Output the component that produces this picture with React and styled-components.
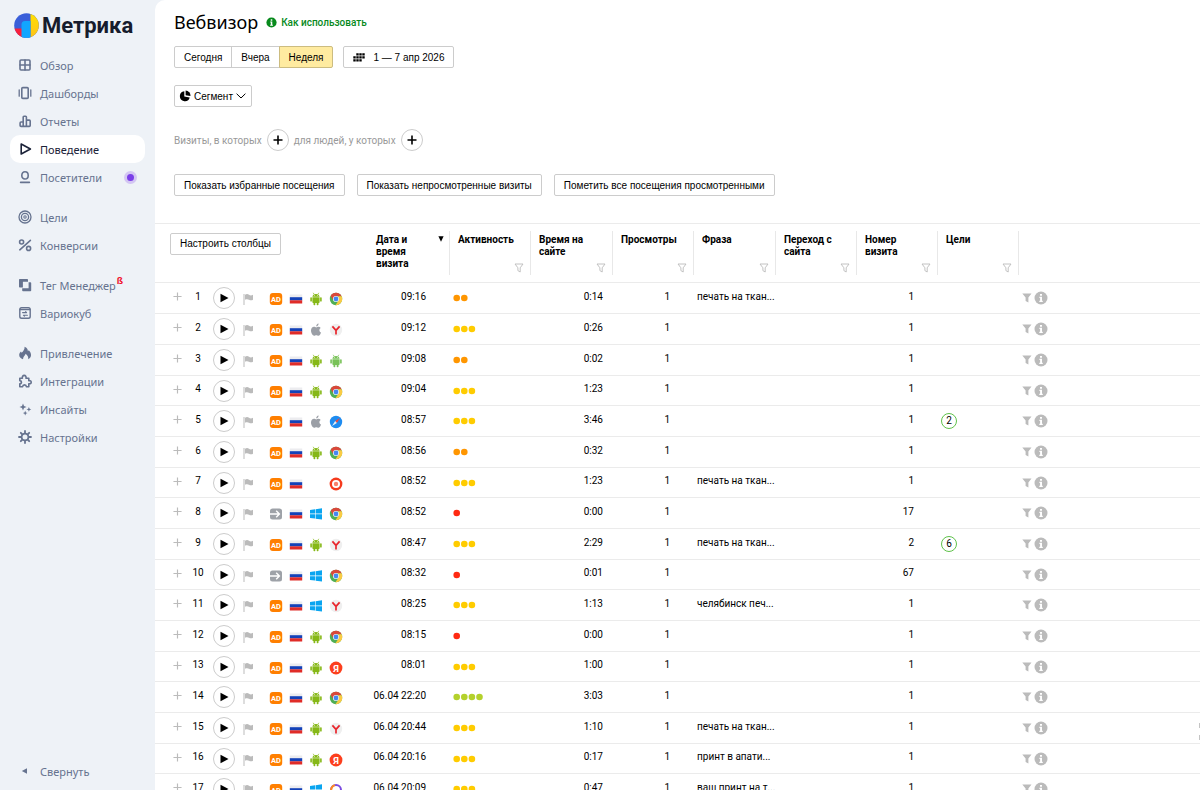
import React from "react";
import styled, { createGlobalStyle, css } from "styled-components";

const GlobalStyle = createGlobalStyle`
  * {
    box-sizing: border-box;
  }

  body {
    margin: 0;
    background: #eef2f7;
    color: #000;
    font-family: Roboto, "Noto Sans", sans-serif;
    font-size: 10px;
  }

  button {
    padding: 0;
    border: 0;
    background: none;
    color: inherit;
    font: inherit;
    cursor: pointer;
  }
`;

const Layout = styled.div`
  display: flex;
  height: 100vh;
  overflow: hidden;
`;

/* ---------- sidebar ---------- */

const Sidebar = styled.aside`
  display: flex;
  flex-direction: column;
  flex: 0 0 155px;
  padding: 10px 10px 5px;
`;

const Logo = styled.a`
  display: flex;
  align-items: center;
  gap: 3px;
  height: 31px;
  padding-left: 4px;
  margin-bottom: 10px;
  color: #161c2d;
  font-size: 22px;
  font-weight: 700;
  line-height: 30px;
  text-decoration: none;
`;

const Nav = styled.nav`
  display: flex;
  flex-direction: column;
  gap: 12px;
  flex: 1;
`;

const NavGroup = styled.ul`
  margin: 0;
  padding: 0;
  list-style: none;
`;

const navItem = css`
  display: flex;
  align-items: center;
  width: 100%;
  height: 28px;
  padding: 0 8px;
  border-radius: 10px;
  color: #66738f;
  font-family: "Noto Sans", sans-serif;
  font-size: 11px;
  font-weight: 400;
  text-decoration: none;

  svg {
    flex: none;
    margin-right: 8px;
  }
`;

const NavLink = styled.a`
  ${navItem}
  ${({ $active }) =>
    $active &&
    css`
      background: #fff;
      color: #1b2238;
    `}
`;

const CollapseButton = styled.button`
  ${navItem}
`;

const Beta = styled.sup`
  align-self: flex-start;
  margin: 5px 0 0 1px;
  color: #f0142d;
  font-size: 9px;
  font-weight: 700;
  line-height: 10px;
`;

const NewDot = styled.span`
  width: 13px;
  height: 13px;
  margin-left: auto;
  border: 3px solid #d3c6f3;
  border-radius: 50%;
  background: #7a3fe8;
`;

/* ---------- main panel ---------- */

const Main = styled.main`
  position: relative;
  flex: 1;
  min-width: 0;
  overflow: hidden;
  border-top-left-radius: 10px;
  background: #fff;
`;

const Head = styled.header`
  padding: 8px 19px 27px;
`;

const TitleRow = styled.div`
  display: flex;
  align-items: center;
  gap: 8px;
  height: 28px;
`;

const Title = styled.h1`
  margin: 0;
  font-family: "Noto Sans", sans-serif;
  font-size: 18px;
  font-weight: 400;
`;

const HelpLink = styled.a`
  display: flex;
  align-items: center;
  gap: 4px;
  color: #078a1c;
  font-weight: 500;
  text-decoration: none;
`;

const Controls = styled.div`
  display: flex;
  align-items: center;
  gap: ${({ $gap }) => $gap || 12}px;
  margin-top: ${({ $top }) => $top}px;
`;

const Button = styled.button`
  display: flex;
  align-items: center;
  height: 22px;
  padding: 0 9px;
  border: 1px solid #ccc;
  border-radius: 2px;
  background: #fff;
  font-family: "Liberation Sans", Arial, sans-serif;
  font-weight: 400;
  white-space: nowrap;
`;

const DateButton = styled(Button)`
  gap: 8px;
`;

const SegmentButton = styled(Button)`
  gap: 3px;
  padding: 0 5px 0 4px;
`;

const Tabs = styled.div`
  display: flex;
`;

const Tab = styled(Button)`
  margin-left: -1px;
  border-radius: 0;

  &:first-child {
    margin-left: 0;
    border-radius: 2px 0 0 2px;
  }

  &:last-child {
    border-radius: 0 2px 2px 0;
  }

  ${({ $active }) =>
    $active &&
    css`
      border-color: #ccbc80;
      background: #ffeba0;
    `}
`;

const Hint = styled.span`
  color: #999;
`;

const RoundButton = styled.button`
  display: flex;
  align-items: center;
  justify-content: center;
  flex: none;
  width: 22px;
  height: 22px;
  border: 1px solid #ccc;
  border-radius: 50%;
  background: #fff;
`;

/* ---------- visits table ---------- */

const Table = styled.table`
  width: 100%;
  border-top: 1px solid #ebebeb;
  border-spacing: 0;
  table-layout: fixed;
`;

const Th = styled.th`
  padding: 7px 0;
  border-bottom: 1px solid #ebebeb;
  font-weight: 700;
  line-height: 12px;
  text-align: left;
  vertical-align: top;
`;

const HeadCell = styled.div`
  display: flex;
  justify-content: space-between;
  height: 44px;
  padding: 3px 6px 0 8px;
  border-right: 1px solid #e8e8e8;

  svg {
    flex: none;
    align-self: ${({ $sorted }) => ($sorted ? "flex-start" : "flex-end")};
    margin: ${({ $sorted }) => ($sorted ? "2px -1px 0 0" : "0 0 2px -9px")};
  }
`;

const HeadLabel = styled.span`
  max-width: 56px;
`;

const SetupCell = styled.div`
  padding: 2px 0 0 15px;
`;

const Row = styled.tr`
  height: 31px;

  &:nth-child(3n + 4) {
    height: 30px;
  }
`;

const Td = styled.td`
  padding: 0 ${({ $right }) => $right || 0}px 4px 3px;
  border-bottom: 1px solid #ebebeb;
  text-align: ${({ $right }) => ($right ? "right" : "left")};
  white-space: nowrap;
`;

const IconTd = styled(Td)`
  padding-bottom: 0;

  svg {
    display: block;
  }
`;

const Lead = styled.div`
  display: flex;
  align-items: center;
  height: 28px;
  padding-left: 15px;
`;

const Expand = styled.button`
  display: flex;
  width: 10px;
  margin-bottom: 3px;
`;

const Index = styled.span`
  width: 30px;
  padding-bottom: 4px;
  text-align: center;
`;

const FlagButton = styled.button`
  display: flex;
  margin: 2px 14px 0 8px;
`;

const Badges = styled.div`
  display: grid;
  grid-template-columns: repeat(4, 14px);
  gap: 6px;
  height: 14px;
  margin-top: 2px;
`;

const Goal = styled.span`
  display: block;
  width: 16px;
  height: 16px;
  border: 1px solid #5fc24a;
  border-radius: 50%;
  line-height: 14px;
  text-align: center;
`;

const Actions = styled.div`
  display: flex;
  align-items: center;
  gap: 2px;
`;

/* handle of the help widget, tucked behind the right edge */
const WidgetHandle = styled.span`
  position: absolute;
  right: 0;
  bottom: 50px;
  width: 1px;
  height: 17px;
  border: solid #c4c4c4;
  border-width: 5px 0;
`;

/* ---------- sidebar icons ---------- */

const Stroke = ({ children }) => (
  <svg
    width="14"
    height="14"
    viewBox="0 0 14 14"
    fill="none"
    stroke="currentColor"
    strokeWidth="1.6"
    strokeLinejoin="round"
    strokeLinecap="round"
    aria-hidden="true"
  >
    {children}
  </svg>
);

const Solid = ({ children }) => (
  <svg width="14" height="14" viewBox="0 0 14 14" fill="currentColor" aria-hidden="true">
    {children}
  </svg>
);

const icons = {
  overview: (
    <Stroke>
      <rect x="2" y="2" width="10" height="10" rx="1" />
      <path d="M7 2v10M2 7h10" />
    </Stroke>
  ),
  boards: (
    <Stroke>
      <rect x="3.8" y="1.6" width="6.4" height="10.8" rx="1" />
      <path d="M1.2 3.8v6.4M12.8 3.8v6.4" strokeWidth="1.3" />
    </Stroke>
  ),
  reports: (
    <Stroke>
      <path d="M5.2 12.4V3q0-.8.8-.8h1.6q.8 0 .8.8v9.4M5.2 8H3q-.9 0-.9.9v2.6q0 .9.9.9h8.3q.9 0 .9-.9V7q0-.9-.9-.9H8.4" />
    </Stroke>
  ),
  behavior: (
    <Stroke>
      <path d="M3.2 2l9.2 5-9.2 5z" />
    </Stroke>
  ),
  visitors: (
    <Stroke>
      <path d="M7 1.8c2 0 3.2 1.5 3.2 3.6S9 9 7 9 3.8 7.5 3.8 5.4 5 1.8 7 1.8zM2.6 12.4h8.8" />
    </Stroke>
  ),
  goals: (
    <Stroke>
      <circle cx="7" cy="7" r="6" strokeWidth="1.3" />
      <circle cx="7" cy="7" r="3.6" strokeWidth="1.3" />
      <circle cx="7" cy="7" r="1.2" strokeWidth="1.1" />
    </Stroke>
  ),
  conversions: (
    <Stroke>
      <path d="M12.4 2.4L1.8 11.8" />
      <circle cx="3.6" cy="4" r="2" />
      <circle cx="10.6" cy="10.4" r="2" />
    </Stroke>
  ),
  tags: (
    <Solid>
      <path d="M1.8 1h7.4q.8 0 .8.8v1.9H4.9v5.9H1.8q-.8 0-.8-.8V1.8q0-.8.8-.8z" />
      <path d="M10.6 4.2h1.8q.8 0 .8.8v7.4q0 .8-.8.8H5q-.8 0-.8-.8v-2.2h6.4z" />
    </Solid>
  ),
  variocube: (
    <Stroke>
      <rect x="1.8" y="1.8" width="10.4" height="10.4" rx="1.8" strokeWidth="1.4" />
      <path d="M2 3.6h10" strokeWidth="1.2" />
      <path d="M4.6 6.6h4l-1-1M9.4 9.2h-4l1 1" strokeWidth="1.1" />
    </Stroke>
  ),
  acquisition: (
    <Solid>
      <path d="M6.6.8c3 1.4 3.4 3.2 3.2 4.4l1-1c1.6 1.8 2.4 3.4 2.2 5.4-.2 1.8-1.2 3-2.8 3.6.4-2-.6-4-2.6-5.4C7.2 9.6 5.2 10.2 5 13.2 2.6 12.6 1.2 11 1.2 9c0-1.600.8-2.600 1.800-3.600l.6 1.400C5 5.600 6.800 3.600 6.600.8z" />
    </Solid>
  ),
  integrations: (
    <Stroke>
      <path d="M1.8 4.2h2.6C4 2.6 4.9 1.4 6.2 1.4s2.2 1.2 1.8 2.8h2.8v2.5c1.5-.3 2.4.4 2.4 1.5s-.9 1.9-2.4 1.5v3H8.4c-.1-1.2-.8-1.8-1.9-1.8s-1.8.6-1.9 1.800H1.800V9.900C3 9.700 3.500 9 3.500 8.200S3 6.800 1.800 6.600z" />
    </Stroke>
  ),
  insights: (
    <Solid>
      <path d="M5 1.5l1 2.500 2.500 1L6 6 5 8.500 4 6 1.500 5 4 4zM10.900 5l.7 1.700 1.700.7-1.700.7-.7 1.700-.7-1.700-1.700-.7 1.700-.7zM7.200 8.800l.7 1.600 1.600.7-1.600.7-.7 1.600-.7-1.600-1.600-.7 1.600-.7z" />
    </Solid>
  ),
  settings: (
    <Stroke>
      <circle cx="7" cy="7" r="3.4" strokeWidth="1.8" />
      <path
        d="M7 1v1.8M7 11.2V13M1 7h1.8M11.2 7H13M2.8 2.8L4 4M10 10l1.2 1.2M2.8 11.2L4 10M10 4l1.2-1.2"
        strokeWidth="1.8"
      />
    </Stroke>
  ),
  collapse: (
    <Solid>
      <path d="M9 4.2v5.6L3.8 7z" />
    </Solid>
  ),
};

const LogoMark = () => (
  <svg width="25" height="25" viewBox="0 0 25 25" aria-hidden="true">
    <defs>
      <clipPath id="logo-round">
        <circle cx="12.5" cy="12.5" r="12.3" />
      </clipPath>
      <linearGradient id="logo-sun" x1="0" y1="0" x2="0" y2="1">
        <stop offset="0" stopColor="#ffe000" />
        <stop offset="1" stopColor="#ffc21a" />
      </linearGradient>
    </defs>
    <g clipPath="url(#logo-round)">
      <rect width="25" height="25" fill="#3a5fd9" />
      <rect y="15.5" width="9" height="10" fill="#f8203c" />
      <rect x="16.5" width="9" height="25" fill="url(#logo-sun)" />
      <path d="M7.5 25V11.5q0-3.500 3.500-3.500h5.500V25z" fill="#12a5ff" />
    </g>
  </svg>
);

/* ---------- page icons ---------- */

const InfoIcon = ({ size, color }) => (
  <svg width={size} height={size} viewBox="0 0 14 14" aria-hidden="true">
    <circle cx="7" cy="7" r="6.5" fill={color} />
    <path d="M6 3h2v1.8H6zM5.400 5.800H8v4h.8V11H5.300V9.800h.8V7h-.7z" fill="#fff" />
  </svg>
);

const CalendarIcon = () => (
  <svg width="12" height="9" viewBox="0 0 12 9" aria-hidden="true">
    <path
      d="M3.300.2h2.400v2.400H3.300zM6.300.2h2.400v2.400H6.300zM9.300.2h2.400v2.400H9.300zM.3 3.200h2.400v2.400H.3zM3.300 3.200h2.400v2.400H3.300zM6.300 3.200h2.400v2.400H6.300zM9.300 3.200h2.400v2.400H9.300zM.3 6.200h2.400v2.400H.3zM3.300 6.200h2.400v2.400H3.300zM6.300 6.200h2.400v2.400H6.300z"
      fill="#000"
    />
  </svg>
);

const PieIcon = () => (
  <svg width="12" height="12" viewBox="0 0 12 12" aria-hidden="true">
    <path d="M5.300 1.200A5 5 0 1 0 10.700 7.400L5.300 6.400z" fill="#000" />
    <path d="M6.600.4a5 5 0 0 1 4.800 5.600l-4.800-.8z" fill="#000" />
  </svg>
);

const ChevronIcon = () => (
  <svg width="10" height="6" viewBox="0 0 10 6" aria-hidden="true">
    <path d="M.6.7L5 5 9.400.7" fill="none" stroke="#000" />
  </svg>
);

const PlusIcon = ({ size, color, weight }) => (
  <svg width={size} height={size} viewBox="0 0 10 10" aria-hidden="true">
    <path d="M5 .5v9M.5 5h9" stroke={color} strokeWidth={weight} />
  </svg>
);

const FunnelOutline = () => (
  <svg width="10" height="10" viewBox="0 0 10 10" aria-hidden="true">
    <path d="M1 1h8L6.200 4.800V9L3.900 7.600V4.800z" fill="none" stroke="#bbb" strokeWidth=".9" />
  </svg>
);

const FunnelIcon = () => (
  <svg width="10" height="10" viewBox="0 0 10 10" aria-hidden="true">
    <path d="M.3.5h9.200L6.400 4.600v5L3.600 8V4.600z" fill="#bbb" />
  </svg>
);

const SortIcon = () => (
  <svg width="6" height="6" viewBox="0 0 6 6" aria-hidden="true">
    <path d="M.4.3h5.200L3 5.800z" fill="#000" />
  </svg>
);

const PlayIcon = () => (
  <svg width="10" height="10" viewBox="0 0 10 10" aria-hidden="true">
    <path d="M1.500.7L9.500 5l-8 4.300z" fill="#000" />
  </svg>
);

const FavoriteIcon = () => (
  <svg width="12" height="12" viewBox="0 0 12 12" aria-hidden="true">
    <path d="M1 1v11" stroke="#bbb" strokeWidth="1" />
    <path d="M2 1.800c1.600-1 2.800-.8 4 0s2.600.8 4 0v5c-1.400.8-2.800.6-4 0s-2.400-.8-4 0z" fill="#bbb" />
  </svg>
);

const sources = {
  ad: (
    <svg width="14" height="14" viewBox="0 0 14 14" role="img" aria-label="Реклама">
      <rect x=".8" y="1" width="12.4" height="12" rx="3" fill="#ff7f00" />
      <text
        x="7"
        y="9.8"
        fill="#fff"
        fontFamily="Roboto, sans-serif"
        fontSize="7.5"
        fontWeight="700"
        textAnchor="middle"
      >
        AD
      </text>
    </svg>
  ),
  direct: (
    <svg width="14" height="14" viewBox="0 0 14 14" role="img" aria-label="Прямой заход">
      <rect x="1" y="1.5" width="12" height="11" rx="2.5" fill="#9ea2a8" />
      <path d="M0 7h10M7.200 3.800L10.400 7l-3.200 3.200" fill="none" stroke="#fff" strokeWidth="1.4" />
    </svg>
  ),
};

const RussiaFlag = () => (
  <svg width="14" height="14" viewBox="0 0 14 14" role="img" aria-label="Россия">
    <rect x=".8" y="2.5" width="12.4" height="3.2" fill="#ececef" />
    <rect x=".8" y="5.2" width="12.4" height="3.2" fill="#1442b8" />
    <rect x=".8" y="8.3" width="12.4" height="3.2" fill="#e02c28" />
  </svg>
);

const Droid = ({ color }) => (
  <svg width="14" height="14" viewBox="0 0 14 14" role="img" aria-label="Android">
    <g fill={color}>
      <path d="M3.400 4.700C3.500 3 5 1.900 7 1.900s3.500 1.100 3.600 2.800zM3.400 5.200h7.200v5q0 .8-.8.8H4.200q-.8 0-.8-.8z" />
      <rect x="1.3" y="5.2" width="1.6" height="4.4" rx=".7" />
      <rect x="11.1" y="5.2" width="1.6" height="4.4" rx=".7" />
      <rect x="4.5" y="10" width="1.8" height="3.3" rx=".7" />
      <rect x="7.7" y="10" width="1.8" height="3.3" rx=".7" />
    </g>
    <path d="M4.200.8l.9 1.500M9.800.8l-.9 1.500" stroke={color} strokeWidth=".7" />
    <circle cx="5.4" cy="3.5" r=".45" fill="#fff" />
    <circle cx="8.6" cy="3.5" r=".45" fill="#fff" />
  </svg>
);

const systems = {
  android: <Droid color="#86b817" />,
  apple: (
    <svg width="14" height="14" viewBox="0 0 14 14" fill="#9b9fa6" role="img" aria-label="iOS">
      <path d="M7.200 3.500C7.200 2 8.200.8 9.600.6c.1 1.500-1 2.800-2.400 2.900z" />
      <path d="M7.200 4.400c.6 0 1.300-.6 2.300-.6.9 0 1.700.4 2.200 1.200-1.900 1.200-1.600 3.700.4 4.500-.5 1.400-1.500 3.300-2.700 3.300-.8 0-1.100-.5-2.100-.5s-1.300.5-2.100.5C3.700 12.800 2 10 2 7.600 2 5.200 3.400 3.800 5 3.800c.9 0 1.600.6 2.200.6z" />
    </svg>
  ),
  windows: (
    <svg width="14" height="14" viewBox="0 0 14 14" fill="#0aa5f0" role="img" aria-label="Windows">
      <path d="M1 3l5-.7v4.300H1zM6.600 2.200L13 1.300v5.300H6.600zM1 7.200h5v4.400L1 10.900zM6.600 7.200H13v5.400l-6.400-.9z" />
    </svg>
  ),
};

const browsers = {
  chrome: (
    <svg width="14" height="14" viewBox="0 0 14 14" role="img" aria-label="Chrome">
      <circle cx="7" cy="7" r="6.2" fill="#4fae54" />
      <path d="M1.600 3.900A6.200 6.200 0 0 1 12.600 4.300H7L4.400 8.400z" fill="#d9483b" />
      <path d="M12.600 4.300A6.200 6.200 0 0 1 6.400 13.200L9.700 8.400 9.200 4.300z" fill="#fbcb43" />
      <circle cx="7" cy="7" r="3" fill="#fff" />
      <circle cx="7" cy="7" r="2.4" fill="#4587f0" />
    </svg>
  ),
  yandex: (
    <svg width="14" height="14" viewBox="0 0 14 14" role="img" aria-label="Яндекс Браузер">
      <circle cx="7" cy="7" r="6.2" fill="#efefef" />
      <path d="M3.400 3.400L7 7.400l3.600-4M7 7v4.600" fill="none" stroke="#e8262d" strokeWidth="1.7" />
    </svg>
  ),
  webview: <Droid color="#78c257" />,
  safari: (
    <svg width="14" height="14" viewBox="0 0 14 14" role="img" aria-label="Safari">
      <circle cx="7" cy="7" r="6.2" fill="#1f8cf0" />
      <path d="M11 3L7.900 7.900 6.100 6.100z" fill="#f0483c" />
      <path d="M3 11l3.100-4.900 1.800 1.800z" fill="#e8eef5" />
    </svg>
  ),
  search: (
    <svg width="14" height="14" viewBox="0 0 14 14" role="img" aria-label="Яндекс">
      <circle cx="7" cy="7" r="6.4" fill="#f53a1d" />
      <circle cx="7" cy="7" r="4" fill="#fff" />
      <circle cx="7" cy="7" r="2.2" fill="#f7806c" />
    </svg>
  ),
  app: (
    <svg width="14" height="14" viewBox="0 0 14 14" role="img" aria-label="Яндекс">
      <circle cx="7" cy="7" r="6.4" fill="#fc3f1d" />
      <text
        x="7"
        y="10.5"
        fill="#fff"
        fontFamily="Roboto, sans-serif"
        fontSize="9.5"
        fontWeight="700"
        textAnchor="middle"
      >
        Я
      </text>
    </svg>
  ),
  firefox: (
    <svg width="14" height="14" viewBox="0 0 14 14" role="img" aria-label="Firefox">
      <circle cx="7" cy="7" r="5" fill="#fff" stroke="#7b4be0" strokeWidth="2" />
      <path d="M2.600 9A5 5 0 0 1 6 2.100" fill="none" stroke="#ff8a1f" strokeWidth="2" />
    </svg>
  ),
};

const dotColors = { 1: "#ff2a12", 2: "#ff9600", 3: "#ffcc00", 4: "#b4d12c" };

const Activity = ({ level }) => (
  <svg width="32" height="8" viewBox="0 0 32 8" role="img" aria-label={`Активность: ${level}`}>
    {Array.from({ length: level }, (_, i) => (
      <circle key={i} cx={3.7 + i * 7.6} cy="4" r="3.3" fill={dotColors[level]} />
    ))}
  </svg>
);

/* ---------- data ---------- */

const menu = [
  [
    { icon: "overview", label: "Обзор" },
    { icon: "boards", label: "Дашборды" },
    { icon: "reports", label: "Отчеты" },
    { icon: "behavior", label: "Поведение", active: true },
    { icon: "visitors", label: "Посетители", dot: true },
  ],
  [
    { icon: "goals", label: "Цели" },
    { icon: "conversions", label: "Конверсии" },
  ],
  [
    { icon: "tags", label: "Тег Менеджер", beta: true },
    { icon: "variocube", label: "Вариокуб" },
  ],
  [
    { icon: "acquisition", label: "Привлечение" },
    { icon: "integrations", label: "Интеграции" },
    { icon: "insights", label: "Инсайты" },
    { icon: "settings", label: "Настройки" },
  ],
];

const columns = [
  { label: "Дата и время визита", width: 82, sorted: true },
  { label: "Активность", width: 81 },
  { label: "Время на сайте", width: 82 },
  { label: "Просмотры", width: 81 },
  { label: "Фраза", width: 82 },
  { label: "Переход с сайта", width: 81 },
  { label: "Номер визита", width: 81 },
  { label: "Цели", width: 81 },
];

// source, os, browser, time, activity, duration, phrase, visit number, goals
const visits = [
  ["ad", "android", "chrome", "09:16", 2, "0:14", "печать на ткан...", 1],
  ["ad", "apple", "yandex", "09:12", 3, "0:26", "", 1],
  ["ad", "android", "webview", "09:08", 2, "0:02", "", 1],
  ["ad", "android", "chrome", "09:04", 3, "1:23", "", 1],
  ["ad", "apple", "safari", "08:57", 3, "3:46", "", 1, 2],
  ["ad", "android", "chrome", "08:56", 2, "0:32", "", 1],
  ["ad", "", "search", "08:52", 3, "1:23", "печать на ткан...", 1],
  ["direct", "windows", "chrome", "08:52", 1, "0:00", "", 17],
  ["ad", "android", "yandex", "08:47", 3, "2:29", "печать на ткан...", 2, 6],
  ["direct", "windows", "chrome", "08:32", 1, "0:01", "", 67],
  ["ad", "windows", "yandex", "08:25", 3, "1:13", "челябинск печ...", 1],
  ["ad", "android", "chrome", "08:15", 1, "0:00", "", 1],
  ["ad", "android", "app", "08:01", 3, "1:00", "", 1],
  ["ad", "android", "chrome", "06.04 22:20", 4, "3:03", "", 1],
  ["ad", "android", "yandex", "06.04 20:44", 3, "1:10", "печать на ткан...", 1],
  ["ad", "android", "app", "06.04 20:16", 3, "0:17", "принт в апати...", 1],
  ["ad", "windows", "firefox", "06.04 20:09", 3, "0:47", "ваш принт на т...", 1],
];

const Visit = ({ index, visit }) => {
  const [source, os, browser, time, activity, duration, phrase, number, goals] = visit;

  return (
    <Row>
      <IconTd>
        <Lead>
          <Expand aria-label="Развернуть">
            <PlusIcon size="9" color="#bbb" weight="1.3" />
          </Expand>
          <Index>{index}</Index>
          <RoundButton aria-label="Воспроизвести">
            <PlayIcon />
          </RoundButton>
          <FlagButton aria-label="В избранное">
            <FavoriteIcon />
          </FlagButton>
          <Badges>
            {sources[source]}
            <RussiaFlag />
            {systems[os] || <span />}
            {browsers[browser]}
          </Badges>
        </Lead>
      </IconTd>
      <Td $right={24}>{time}</Td>
      <IconTd>
        <Activity level={activity} />
      </IconTd>
      <Td $right={10}>{duration}</Td>
      <Td $right={24}>1</Td>
      <Td>{phrase}</Td>
      <Td />
      <Td $right={24}>{number}</Td>
      <IconTd>{goals && <Goal>{goals}</Goal>}</IconTd>
      <IconTd>
        <Actions>
          <button aria-label="Фильтр">
            <FunnelIcon />
          </button>
          <button aria-label="Информация о визите">
            <InfoIcon size="14" color="#bbb" />
          </button>
        </Actions>
      </IconTd>
    </Row>
  );
};

const App = () => {
  return (
    <Layout>
      <GlobalStyle />
      <Sidebar>
        <Logo href="#">
          <LogoMark />
          Метрика
        </Logo>
        <Nav>
          {menu.map((group, i) => (
            <NavGroup key={i}>
              {group.map((item) => (
                <li key={item.icon}>
                  <NavLink href="#" $active={item.active}>
                    {icons[item.icon]}
                    {item.label}
                    {item.beta && <Beta>ß</Beta>}
                    {item.dot && <NewDot />}
                  </NavLink>
                </li>
              ))}
            </NavGroup>
          ))}
        </Nav>
        <CollapseButton>
          {icons.collapse}
          Свернуть
        </CollapseButton>
      </Sidebar>

      <Main>
        <Head>
          <TitleRow>
            <Title>Вебвизор</Title>
            <HelpLink href="#">
              <InfoIcon size="11" color="#078a1c" />
              Как использовать
            </HelpLink>
          </TitleRow>
          <Controls $top={10} $gap={10}>
            <Tabs>
              <Tab>Сегодня</Tab>
              <Tab>Вчера</Tab>
              <Tab $active>Неделя</Tab>
            </Tabs>
            <DateButton>
              <CalendarIcon />1 — 7 апр 2026
            </DateButton>
          </Controls>
          <Controls $top={17}>
            <SegmentButton>
              <PieIcon />
              Сегмент
              <ChevronIcon />
            </SegmentButton>
          </Controls>
          <Controls $top={22} $gap={5}>
            <Hint>Визиты, в которых</Hint>
            <RoundButton aria-label="Добавить условие для визитов">
              <PlusIcon size="10" color="#000" weight="1.6" />
            </RoundButton>
            <Hint>для людей, у которых</Hint>
            <RoundButton aria-label="Добавить условие для людей">
              <PlusIcon size="10" color="#000" weight="1.6" />
            </RoundButton>
          </Controls>
          <Controls $top={23}>
            <Button>Показать избранные посещения</Button>
            <Button>Показать непросмотренные визиты</Button>
            <Button>Пометить все посещения просмотренными</Button>
          </Controls>
        </Head>

        <Table>
          <colgroup>
            <col width="213" />
            {columns.map((column) => (
              <col key={column.label} width={column.width} />
            ))}
            <col />
          </colgroup>
          <thead>
            <tr>
              <Th>
                <SetupCell>
                  <Button>Настроить столбцы</Button>
                </SetupCell>
              </Th>
              {columns.map((column) => (
                <Th key={column.label}>
                  <HeadCell $sorted={column.sorted}>
                    <HeadLabel>{column.label}</HeadLabel>
                    {column.sorted ? <SortIcon /> : <FunnelOutline />}
                  </HeadCell>
                </Th>
              ))}
              <Th />
            </tr>
          </thead>
          <tbody>
            {visits.map((visit, i) => (
              <Visit key={i} index={i + 1} visit={visit} />
            ))}
          </tbody>
        </Table>
        <WidgetHandle />
      </Main>
    </Layout>
  );
};

export default App;
